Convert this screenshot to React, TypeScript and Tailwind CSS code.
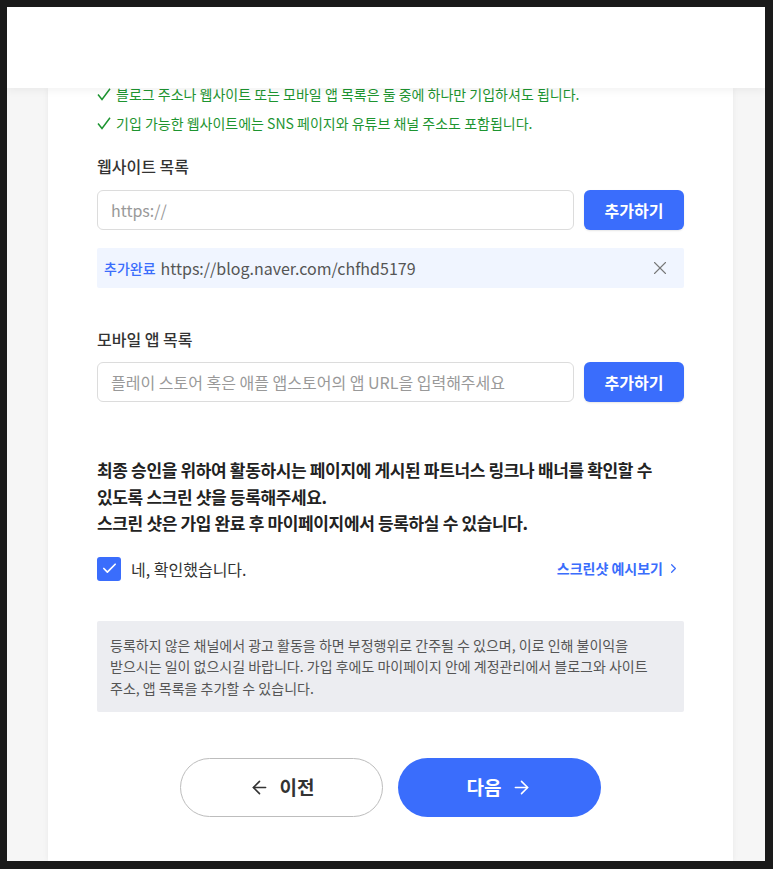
import React from "react";
import { ArrowLeft, ArrowRight, X, Check, ChevronRight } from "lucide-react";

const font = { fontFamily: '"Noto Sans CJK KR", "Noto Sans", sans-serif' };

function GreenCheck() {
  return (
    <svg width="14" height="13" viewBox="0 0 14 13" className="shrink-0">
      <polyline points="1,6.5 5,11.5 13,0.8" fill="none" stroke="currentColor" strokeWidth="1.5" />
    </svg>
  );
}

export default function App() {
  return (
    <div
      className="w-[773px] h-[869px] bg-[#1a1a1a] pt-[7px] pl-[7px] pr-[8px] pb-[8px] overflow-hidden"
      style={font}
    >
      <div className="w-full h-full bg-[#f6f6f6] flex flex-col overflow-hidden">
        <div className="relative z-10 h-[81px] shrink-0 bg-white shadow-[0_3px_8px_rgba(0,0,0,0.05)]" />
        <div className="ml-[41px] mr-[32px] flex-1 bg-white shadow-[0_0_6px_rgba(0,0,0,0.06)] px-[49px]">
          <div className="-mt-[1px] flex flex-col gap-[15px] text-[14px] leading-[14px] text-[#1d9430]">
            <div className="flex items-center gap-[5px]">
              <GreenCheck />
              <span>블로그 주소나 웹사이트 또는 모바일 앱 목록은 둘 중에 하나만 기입하셔도 됩니다.</span>
            </div>
            <div className="flex items-center gap-[5px]">
              <GreenCheck />
              <span>기입 가능한 웹사이트에는 SNS 페이지와 유튜브 채널 주소도 포함됩니다.</span>
            </div>
          </div>

          <div className="mt-[24px] text-[16px] leading-[24px] font-medium text-[#333]">웹사이트 목록</div>
          <div className="mt-[12px] flex gap-[10px]">
            <div className="flex-1 h-[40px] rounded-[6px] border border-[#dcdcdc] flex items-center px-[13px] text-[16px] text-[#999]">
              https://
            </div>
            <button className="w-[100px] h-[40px] rounded-[6px] bg-[#3a6dfc] text-white text-[16px] font-bold shadow-[0_1px_2px_rgba(0,0,0,0.1)]">
              추가하기
            </button>
          </div>
          <div className="mt-[18px] h-[40px] bg-[#f0f5ff] rounded-[2px] flex items-center pl-[7px] pr-[13px]">
            <span className="text-[14px] text-[#3a6dfc] font-medium">추가완료</span>
            <span className="ml-[5px] text-[16px] text-[#555]">https://blog.naver.com/chfhd5179</span>
            <X size={22} strokeWidth={1.2} className="ml-auto text-[#777]" />
          </div>

          <div className="mt-[39px] text-[16px] leading-[24px] font-medium text-[#333]">모바일 앱 목록</div>
          <div className="mt-[11px] flex gap-[10px]">
            <div className="flex-1 h-[40px] rounded-[6px] border border-[#dcdcdc] flex items-center px-[13px] text-[16px] text-[#999]">
              플레이 스토어 혹은 애플 앱스토어의 앱 URL을 입력해주세요
            </div>
            <button className="w-[100px] h-[40px] rounded-[6px] bg-[#3a6dfc] text-white text-[16px] font-bold shadow-[0_1px_2px_rgba(0,0,0,0.1)]">
              추가하기
            </button>
          </div>

          <p className="mt-[55px] text-[17px] leading-[26.5px] font-bold text-[#222] tracking-[-0.35px]">
            최종 승인을 위하여 활동하시는 페이지에 게시된 파트너스 링크나 배너를 확인할 수
            <br />
            있도록 스크린 샷을 등록해주세요.
            <br />
            스크린 샷은 가입 완료 후 마이페이지에서 등록하실 수 있습니다.
          </p>

          <div className="mt-[20px] flex items-center">
            <div className="w-[24px] h-[24px] rounded-[3px] bg-[#3a6dfc] flex items-center justify-center">
              <Check size={17} strokeWidth={2.4} className="text-white" />
            </div>
            <span className="ml-[10px] text-[16px] text-[#333]">네, 확인했습니다.</span>
            <span className="ml-auto flex items-center text-[14px] font-bold text-[#3a6dfc]">
              스크린샷 예시보기
              <ChevronRight size={15} strokeWidth={2} className="ml-[3px] mr-[3px]" />
            </span>
          </div>

          <div className="mt-[40px] bg-[#ecedf1] rounded-[2px] pl-[13px] pr-[10px] pt-[14px] pb-[13px] text-[14px] leading-[21.5px] text-[#555]">
            등록하지 않은 채널에서 광고 활동을 하면 부정행위로 간주될 수 있으며, 이로 인해 불이익을
            <br />
            받으시는 일이 없으시길 바랍니다. 가입 후에도 마이페이지 안에 계정관리에서 블로그와 사이트
            <br />
            주소, 앱 목록을 추가할 수 있습니다.
          </div>

          <div className="mt-[46px] flex justify-center gap-[15px]">
            <button className="w-[203px] h-[59px] rounded-full border border-[#bdbdbd] bg-white flex items-center justify-center gap-[10px] text-[19px] font-bold text-[#333]">
              <ArrowLeft size={21} strokeWidth={1.8} />
              이전
            </button>
            <button className="w-[203px] h-[59px] rounded-full bg-[#3a6dfc] flex items-center justify-center gap-[10px] text-[19px] font-bold text-white">
              다음
              <ArrowRight size={21} strokeWidth={1.8} />
            </button>
          </div>
        </div>
      </div>
    </div>
  );
}
